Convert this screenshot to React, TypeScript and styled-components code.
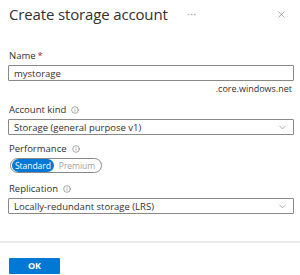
import { FC } from "react"
import { ChevronDown, Info, MoreHorizontal, X } from "lucide-react"
import styled, { createGlobalStyle } from "styled-components"

type FieldProps = {
	top: number
}

type SegmentProps = {
	active?: boolean
}

const App: FC = () => {
	return (
		<Page>
			<GlobalStyle />
			<Header>
				<Title>Create storage account</Title>
				<More>
					<MoreHorizontal size={11} strokeWidth={1.2} />
				</More>
				<Close>
					<X size={11} strokeWidth={1.1} />
				</Close>
			</Header>

			<Form>
				<Field top={24}>
					<Label>
						Name <Required>*</Required>
					</Label>
					<Input type="text" defaultValue="mystorage" />
					<Hint>.core.windows.net</Hint>
				</Field>

				<Field top={9}>
					<Label>
						Account kind
						<Info size={8} strokeWidth={1.6} />
					</Label>
					<Select>
						<span>Storage (general purpose v1)</span>
						<ChevronDown size={11} strokeWidth={1.1} />
					</Select>
				</Field>

				<Field top={8}>
					<Label>
						Performance
						<Info size={8} strokeWidth={1.6} />
					</Label>
					<Toggle>
						<Segment active>Standard</Segment>
						<Segment>Premium</Segment>
					</Toggle>
				</Field>

				<Field top={10}>
					<Label>
						Replication
						<Info size={8} strokeWidth={1.6} />
					</Label>
					<Select>
						<span>Locally-redundant storage (LRS)</span>
						<ChevronDown size={11} strokeWidth={1.1} />
					</Select>
				</Field>
			</Form>

			<Footer>
				<OkButton>OK</OkButton>
			</Footer>
		</Page>
	)
}

const GlobalStyle = createGlobalStyle`
	body {
		margin: 0;
		background: #ffffff;
		font-family: "Open Sans", "Noto Sans", sans-serif;
		color: #323130;
	}
`

const Page = styled.div`
	width: 300px;
	height: 275px;
	display: flex;
	flex-direction: column;
	box-sizing: border-box;
`

const Header = styled.div`
	display: flex;
	align-items: center;
	height: 26px;
	padding: 2px 13px 0 9px;
	box-sizing: border-box;
`

const Title = styled.h1`
	margin: 0;
	font-size: 15px;
	font-weight: 400;
	letter-spacing: -0.15px;
	color: #323130;
	white-space: nowrap;
`

const More = styled.span`
	display: flex;
	margin-left: 18px;
	color: #a19f9d;
`

const Close = styled.span`
	margin-left: auto;
	display: flex;
	color: #605e5c;
`

const Form = styled.div`
	flex: 1;
	padding: 0 6px 0 8px;
`

const Field = styled.div<FieldProps>`
	margin-top: ${props => props.top}px;
	display: flex;
	flex-direction: column;
`

const Label = styled.label`
	display: flex;
	align-items: center;
	gap: 5px;
	height: 12px;
	margin: 0 0 3px 1px;
	font-size: 9.5px;
	line-height: 12px;
	color: #323130;

	svg {
		color: #605e5c;
	}
`

const Required = styled.span`
	color: #a4262c;
	margin-left: -3px;
`

const Input = styled.input`
	height: 16px;
	box-sizing: border-box;
	border: 1px solid #8a8886;
	border-radius: 1px;
	padding: 0 5px;
	font-family: inherit;
	font-size: 9.5px;
	color: #323130;
	outline: none;
`

const Hint = styled.div`
	margin-top: 2px;
	height: 12px;
	text-align: right;
	font-size: 9px;
	line-height: 12px;
	color: #323130;
	padding-right: 2px;
`

const Select = styled.div`
	display: flex;
	align-items: center;
	justify-content: space-between;
	height: 16px;
	box-sizing: border-box;
	border: 1px solid #8a8886;
	border-radius: 1px;
	padding: 0 5px;
	font-size: 9.5px;
	color: #323130;

	svg {
		color: #605e5c;
	}
`

const Toggle = styled.div`
	display: flex;
	align-items: center;
	align-self: flex-start;
	margin-left: 2px;
	height: 15px;
	box-sizing: border-box;
	border: 1px solid #8a8886;
	border-radius: 8px;
	padding: 0 1px;
`

const Segment = styled.span<SegmentProps>`
	display: flex;
	align-items: center;
	justify-content: center;
	height: 13px;
	padding: 0 ${props => (props.active ? "3px" : "5px")};
	border-radius: 7px;
	font-size: 8.6px;
	letter-spacing: -0.1px;
	background: ${props => (props.active ? "#0078d4" : "transparent")};
	color: ${props => (props.active ? "#ffffff" : "#a19f9d")};
`

const Footer = styled.div`
	height: 34px;
	box-sizing: border-box;
	border-top: 2px solid #edebe9;
	padding: 9px 9px 0;
`

const OkButton = styled.button`
	width: 51px;
	height: 16px;
	border: none;
	border-radius: 1px;
	background: #0078d4;
	color: #ffffff;
	font-family: inherit;
	font-size: 9px;
	font-weight: 700;
	padding: 0;
	cursor: pointer;
`

export default App
